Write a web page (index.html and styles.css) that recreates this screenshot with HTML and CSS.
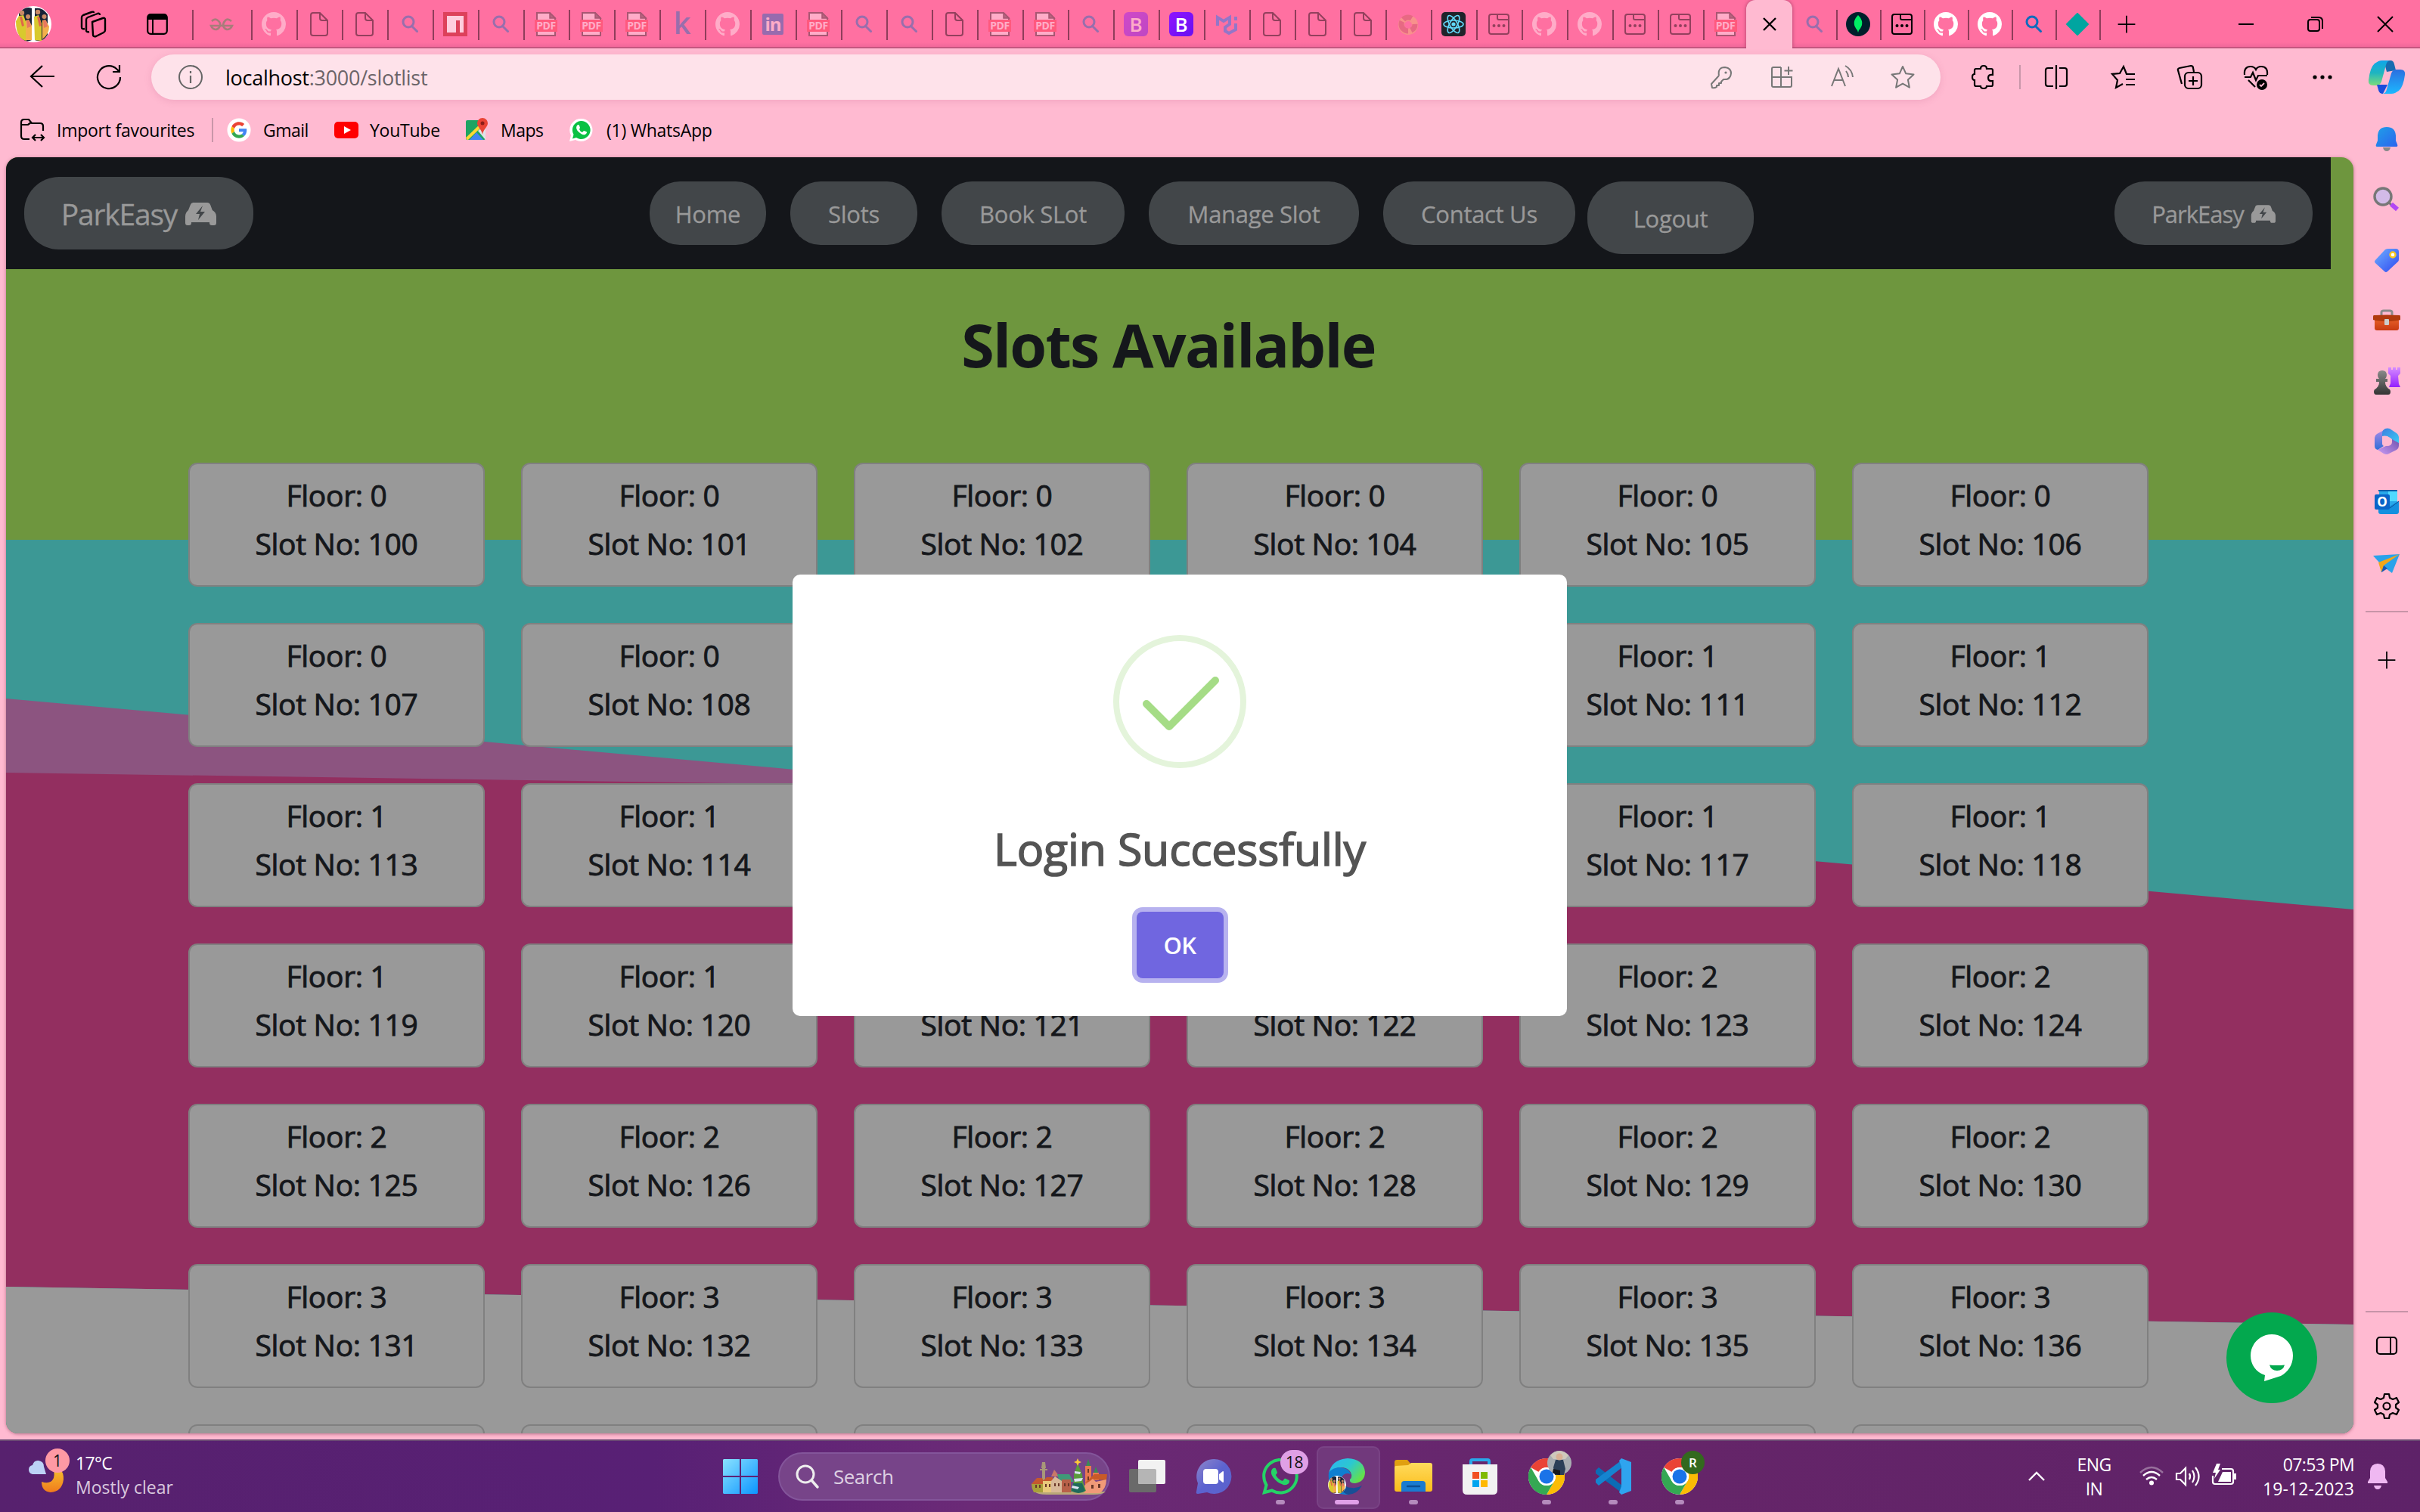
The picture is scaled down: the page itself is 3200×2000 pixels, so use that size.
FILE: index.html
```html
<!DOCTYPE html>
<html lang="en">
<head>
<meta charset="utf-8">
<title>ParkEasy</title>
<link rel="stylesheet" href="styles.css">
</head>
<body>
<svg class="defs" width="0" height="0">
  <defs>
    <linearGradient id="gCop1" x1="0" y1="0" x2="0" y2="1"><stop offset="0" stop-color="#0fa5e9"/><stop offset=".5" stop-color="#1fb5c0"/><stop offset="1" stop-color="#7bdc7a"/></linearGradient>
    <linearGradient id="gCop2" x1="0" y1="0" x2="0" y2="1"><stop offset="0" stop-color="#2b6fe0"/><stop offset="1" stop-color="#1cb8ff"/></linearGradient>
    <linearGradient id="gBell" x1="0" y1="0" x2="1" y2="1"><stop offset="0" stop-color="#1fa0e8"/><stop offset="1" stop-color="#2b63ee"/></linearGradient>
    <linearGradient id="gTag" x1="0" y1="0" x2="1" y2="1"><stop offset="0" stop-color="#6fb0ff"/><stop offset="1" stop-color="#2f48f0"/></linearGradient>
    <linearGradient id="gBox" x1="0" y1="0" x2="0" y2="1"><stop offset="0" stop-color="#f06a30"/><stop offset="1" stop-color="#c83a12"/></linearGradient>
    <linearGradient id="gRook" x1="0" y1="0" x2="0" y2="1"><stop offset="0" stop-color="#d68cff"/><stop offset="1" stop-color="#9420ff"/></linearGradient>
    <linearGradient id="gPawn" x1="0" y1="0" x2="0" y2="1"><stop offset="0" stop-color="#8a8a8a"/><stop offset="1" stop-color="#333"/></linearGradient>
    <linearGradient id="gWin" x1="0" y1="0" x2="1" y2="1"><stop offset="0" stop-color="#8ae2ff"/><stop offset="1" stop-color="#0c95ff"/></linearGradient>
    <linearGradient id="gMoon" x1="0" y1="0" x2="0" y2="1"><stop offset="0" stop-color="#f7c62f"/><stop offset="1" stop-color="#f07a1c"/></linearGradient>
    <linearGradient id="gEdge" x1="0" y1="0" x2="1" y2=".6"><stop offset="0" stop-color="#2cb4f4"/><stop offset=".55" stop-color="#2cc8d0"/><stop offset="1" stop-color="#64e04a"/></linearGradient>
    <linearGradient id="gChat" x1="0" y1="0" x2="1" y2="1"><stop offset="0" stop-color="#8f86c8"/><stop offset=".5" stop-color="#5c63d0"/><stop offset="1" stop-color="#5a62cc"/></linearGradient>
    <linearGradient id="gFold" x1="0" y1="0" x2="0" y2="1"><stop offset="0" stop-color="#ffdb5c"/><stop offset="1" stop-color="#fbbd1b"/></linearGradient>
    <linearGradient id="gM1" x1="0" y1="0" x2="0" y2="1"><stop offset="0" stop-color="#a98be8"/><stop offset="1" stop-color="#2f6fd8"/></linearGradient>
    <linearGradient id="gM2" x1="0" y1="0" x2="1" y2="1"><stop offset="0" stop-color="#3a7fe0"/><stop offset="1" stop-color="#3ccbf4"/></linearGradient>
    <linearGradient id="gM3" x1="1" y1="0" x2="0" y2="1"><stop offset="0" stop-color="#6a4aa8"/><stop offset="1" stop-color="#c99cf4"/></linearGradient>
  </defs>
  <symbol id="github" viewBox="0 0 16 16"><path fill="#fff" d="M8 0C3.58 0 0 3.58 0 8c0 3.54 2.29 6.53 5.47 7.59.4.07.55-.17.55-.38 0-.19-.01-.82-.01-1.49-2.01.37-2.53-.49-2.69-.94-.09-.23-.48-.94-.82-1.13-.28-.15-.68-.52-.01-.53.63-.01 1.08.58 1.23.82.72 1.21 1.87.87 2.33.66.07-.52.28-.87.51-1.07-1.78-.2-3.64-.89-3.64-3.95 0-.87.31-1.59.82-2.15-.08-.2-.36-1.02.08-2.12 0 0 .67-.21 2.2.82.64-.18 1.32-.27 2-.27s1.36.09 2 .27c1.53-1.04 2.2-.82 2.2-.82.44 1.1.16 1.92.08 2.12.51.56.82 1.27.82 2.15 0 3.07-1.87 3.75-3.65 3.95.29.25.54.73.54 1.48 0 1.07-.01 1.93-.01 2.2 0 .21.15.46.55.38A8.01 8.01 0 0016 8c0-4.42-3.58-8-8-8z"/></symbol>
  <symbol id="doc" viewBox="0 0 32 32"><path fill="none" stroke="#000" stroke-width="2" d="M8 1h9l10 10v17a3 3 0 0 1-3 3H8a3 3 0 0 1-3-3V4a3 3 0 0 1 3-3zM17 1v7a3 3 0 0 0 3 3h7"/></symbol>
  <symbol id="mag" viewBox="0 0 32 32"><g fill="none" stroke="#0f6cbd" stroke-width="3"><circle cx="14" cy="13" r="7"/><path d="M18.500 18.500l7 7" stroke-linecap="round"/></g></symbol>
  <symbol id="win" viewBox="0 0 32 32"><path fill="none" stroke="#000" stroke-width="2" d="M6 3h20a3 3 0 0 1 3 3v20a3 3 0 0 1-3 3H6a3 3 0 0 1-3-3V6a3 3 0 0 1 3-3zM14 3v5a2 2 0 0 0 2 2h13"/><circle cx="9.500" cy="18" r="2"/><circle cx="16" cy="18" r="2"/><circle cx="22.500" cy="18" r="2"/></symbol>
  <symbol id="sheet" viewBox="0 0 32 32"><path fill="#fff" stroke="#333" stroke-width="2" d="M4 1h17l7 7v23H4z"/><path d="M21 1v7h7z" fill="#555" stroke="#333" stroke-width="1.500"/><rect x="1" y="10" width="30" height="16" fill="#ff3b4e"/></symbol>
  <symbol id="car" viewBox="0 0 42 32"><path fill="#999" fill-rule="evenodd" d="M12 1h18c2 0 3.500 1 4.200 3l2.600 7c3 1.500 5.200 4.500 5.200 8v9c0 2-1 3-3 3h-3c-2 0-3-1-3-3v-1H9v1c0 2-1 3-3 3H4c-2 0-3-1-3-3v-9c0-3.500 2-6.500 4-8l2.800-7C8.500 2 10 1 12 1zm12 4l-9 11h5l-2 8 9-11h-6z"/></symbol>
  <symbol id="plus" viewBox="0 0 32 32"><path stroke="#000" stroke-width="2" d="M16 3v26M3 16h26"/></symbol>
  <symbol id="wa" viewBox="0 0 16 16"><path d="M13.601 2.326A7.854 7.854 0 0 0 7.994 0C3.627 0 .068 3.558.064 7.926c0 1.399.366 2.760 1.057 3.965L0 16l4.204-1.102a7.933 7.933 0 0 0 3.790.965h.004c4.368 0 7.926-3.558 7.930-7.930A7.898 7.898 0 0 0 13.600 2.326zM7.994 14.521a6.573 6.573 0 0 1-3.356-.920l-.240-.144-2.494.654.666-2.433-.156-.251a6.560 6.560 0 0 1-1.007-3.505c0-3.626 2.957-6.584 6.591-6.584a6.560 6.560 0 0 1 4.660 1.931 6.557 6.557 0 0 1 1.928 4.660c-.004 3.639-2.961 6.592-6.592 6.592zm3.615-4.934c-.197-.099-1.170-.578-1.353-.646-.182-.065-.315-.099-.445.099-.133.197-.513.646-.627.775-.114.133-.232.148-.430.050-.197-.100-.836-.308-1.592-.985-.590-.525-.985-1.175-1.103-1.372-.114-.198-.011-.304.088-.403.087-.088.197-.232.296-.346.100-.114.133-.198.198-.330.065-.134.034-.248-.015-.347-.050-.099-.445-1.076-.612-1.470-.160-.389-.323-.335-.445-.340-.114-.007-.247-.007-.380-.007a.729.729 0 0 0-.529.247c-.182.198-.691.677-.691 1.654 0 .977.710 1.916.810 2.049.098.133 1.394 2.132 3.383 2.992.470.205.840.326 1.129.418.475.152.904.129 1.246.080.380-.058 1.171-.480 1.338-.943.164-.464.164-.860.114-.943-.049-.084-.182-.133-.380-.232z"/></symbol>
  <symbol id="star" viewBox="0 0 32 32"><path fill="none" stroke-width="2" stroke-linejoin="round" d="M16 2l4.200 9.300 10.300 1.200-7.600 7 2 10.200L16 24.600l-8.900 5.100 2-10.200-7.600-7 10.300-1.200z"/></symbol>
  <symbol id="chrome" viewBox="0 0 48 48"><circle cx="24" cy="24" r="24" fill="#fff"/><path fill="#ea4335" d="M24 0a24 24 0 0 1 20.800 12H24a12 12 0 0 0-10.400 6L3.200 12A24 24 0 0 1 24 0z"/><path fill="#fbbc05" d="M44.800 12A24 24 0 0 1 24 48l10.400-18A12 12 0 0 0 34.400 18 12 12 0 0 0 24 12z"/><path fill="#34a853" d="M24 48A24 24 0 0 1 3.200 12l10.400 18a12 12 0 0 0 20.800 0z"/><circle cx="24" cy="24" r="12" fill="#fff"/><circle cx="24" cy="24" r="9.500" fill="#1a73e8"/></symbol>
  <symbol id="pals" viewBox="0 0 48 48"><circle cx="24" cy="24" r="24" fill="#fff"/><path fill="#182438" d="M5 10Q13-1 22 3v42Q12 50 5 38zM26 3q10-2 17 8v27q-7 11-17 7z"/><path fill="#d8c92e" d="M1 20l4-7 6-1 4 11v23q-6-1-9-6-5-7-5-20zM25 14l6-2 4 11v23l-9-1z"/><path fill="#e0664a" d="M6 14l3 0 3 12-3 1zM29 14l3 0 3 12-3 1z"/><path fill="#f2b04a" d="M14 19l4-1 4 8v19h-8zM36 19l4-1 5 9q0 10-9 17z"/><path fill="#e8785e" d="M15 19h4l2 8-5 2zM37 19h4l2 8-5 2z"/><g fill="#c98a66"><circle cx="9" cy="9" r="3.200"/><circle cx="17" cy="14" r="3"/><circle cx="30" cy="8" r="3.200"/><circle cx="38.500" cy="14" r="3"/></g></symbol>
</svg>

<header class="tabs">
  <div class="tabs-left">
    <svg class="avatar"><use href="#pals"/></svg>
    <svg class="ws" viewBox="0 0 34 34"><g fill="none" stroke="#000" stroke-width="2.400" stroke-linejoin="round"><path d="M16 14l14-5q3-1 3 2v14q0 2-2 3l-10 5q-4 1-4-2z"/><path d="M12 27q-4 1-4-2V11q0-2 2-3l13-5q3-1 3 2"/><path d="M6 23q-4 1-4-2V8q0-2 2-3l11-4q3-1 3 1"/></g></svg>
    <svg class="vt" viewBox="0 0 28 28"><rect x="1.200" y="1.200" width="25.600" height="25.600" rx="4" fill="none" stroke="#000" stroke-width="2.200"/><path d="M1 8V4q0-3 3-3h20q3 0 3 3v4zM7 8v19h2V8z"/></svg>
  </div>
  <div class="tab first dim"><svg class="i32" viewBox="0 0 32 32"><g fill="none" stroke="#2f8d46" stroke-width="2.600"><path d="M3 12q4-4 8-1t3 7q-1 4-5 5-5 0-7-5h28q-2 5-7 5-4-1-5-5 0-4 3-7t8 1"/></g></svg></div>
  <div class="tab dim"><svg class="i32"><use href="#github"/></svg></div>
  <div class="tab dim"><svg class="i32"><use href="#doc"/></svg></div>
  <div class="tab dim"><svg class="i32"><use href="#doc"/></svg></div>
  <div class="tab dim"><svg class="i32"><use href="#mag"/></svg></div>
  <div class="tab mid"><svg class="i32" viewBox="0 0 32 32"><rect width="32" height="32" fill="#cb2837"/><path fill="#fff" d="M5 5h22v22h-5V11h-5v16H5z"/></svg></div>
  <div class="tab dim"><svg class="i32"><use href="#mag"/></svg></div>
  <div class="tab dim"><div class="pdf"><svg class="i32"><use href="#sheet"/></svg><b>PDF</b></div></div>
  <div class="tab dim"><div class="pdf"><svg class="i32"><use href="#sheet"/></svg><b>PDF</b></div></div>
  <div class="tab dim"><div class="pdf"><svg class="i32"><use href="#sheet"/></svg><b>PDF</b></div></div>
  <div class="tab dim"><span class="kay">k</span></div>
  <div class="tab dim"><svg class="i32"><use href="#github"/></svg></div>
  <div class="tab dim"><span class="linked">in</span></div>
  <div class="tab dim"><div class="pdf"><svg class="i32"><use href="#sheet"/></svg><b>PDF</b></div></div>
  <div class="tab dim"><svg class="i32"><use href="#mag"/></svg></div>
  <div class="tab dim"><svg class="i32"><use href="#mag"/></svg></div>
  <div class="tab dim"><svg class="i32"><use href="#doc"/></svg></div>
  <div class="tab dim"><div class="pdf"><svg class="i32"><use href="#sheet"/></svg><b>PDF</b></div></div>
  <div class="tab dim"><div class="pdf"><svg class="i32"><use href="#sheet"/></svg><b>PDF</b></div></div>
  <div class="tab dim"><svg class="i32"><use href="#mag"/></svg></div>
  <div class="tab dim"><span class="boot">B</span></div>
  <div class="tab"><span class="boot">B</span></div>
  <div class="tab dim"><svg class="i32" viewBox="0 0 32 32"><g fill="none" stroke="#007fff" stroke-width="4"><path d="M4 18V7l8 5 8-5v9l-6 4v5l5 3 9-5v-8M28 6v5"/></g></svg></div>
  <div class="tab dim"><svg class="i32"><use href="#doc"/></svg></div>
  <div class="tab dim"><svg class="i32"><use href="#doc"/></svg></div>
  <div class="tab dim"><svg class="i32"><use href="#doc"/></svg></div>
  <div class="tab dim"><svg class="i32" viewBox="0 0 32 32"><circle cx="16" cy="17" r="9" fill="none" stroke="#f0c070" stroke-width="8"/><circle cx="16" cy="16" r="9" fill="none" stroke="#c8605c" stroke-width="7" stroke-dasharray="10 4 18 3 12 9"/></svg></div>
  <div class="tab"><svg class="i32" viewBox="0 0 32 32"><rect width="32" height="32" rx="5" fill="#20232a"/><g fill="none" stroke="#61dafb" stroke-width="1.600"><ellipse cx="16" cy="16" rx="13" ry="5"/><ellipse cx="16" cy="16" rx="13" ry="5" transform="rotate(60 16 16)"/><ellipse cx="16" cy="16" rx="13" ry="5" transform="rotate(120 16 16)"/></g><circle cx="16" cy="16" r="2.600" fill="#61dafb"/></svg></div>
  <div class="tab dim"><svg class="i32"><use href="#win"/></svg></div>
  <div class="tab dim"><svg class="i32"><use href="#github"/></svg></div>
  <div class="tab dim"><svg class="i32"><use href="#github"/></svg></div>
  <div class="tab dim"><svg class="i32"><use href="#win"/></svg></div>
  <div class="tab dim"><svg class="i32"><use href="#win"/></svg></div>
  <div class="tab dim last"><div class="pdf"><svg class="i32"><use href="#sheet"/></svg><b>PDF</b></div></div>
  <div class="tab-active"><svg width="18" height="18" viewBox="0 0 18 18"><path d="M1 1l16 16M17 1L1 17" stroke="#000" stroke-width="2.400"/></svg></div>
  <div class="tab r nosep dim"><svg class="i32"><use href="#mag"/></svg></div>
  <div class="tab r"><svg class="i32" viewBox="0 0 32 32"><circle cx="16" cy="16" r="16" fill="#001e2b"/><path fill="#00ed64" d="M16 4q10 10 1 20l-1 3-1-3Q6 14 16 4z"/></svg></div>
  <div class="tab r"><svg class="i32"><use href="#win"/></svg></div>
  <div class="tab r"><svg class="i32"><use href="#github"/></svg></div>
  <div class="tab r"><svg class="i32"><use href="#github"/></svg></div>
  <div class="tab r"><svg class="i32"><use href="#mag"/></svg></div>
  <div class="tab r"><svg class="i32" viewBox="0 0 32 32"><path fill="#00a5a0" stroke="#00a5a0" stroke-width="2" stroke-linejoin="round" d="M16 2l14 14-14 14L2 16z"/></svg></div>
  <div class="tab plus"><svg class="i28"><use href="#plus"/></svg></div>
  <div class="winctl">
    <svg class="i32" viewBox="0 0 32 32"><path d="M6 16h20" stroke="#000" stroke-width="2"/></svg>
    <svg class="i32" viewBox="0 0 32 32"><g fill="none" stroke="#000" stroke-width="2"><rect x="6" y="10" width="15" height="15" rx="3"/><path d="M10 7h10q5 0 5 5v10"/></g></svg>
    <svg class="i32" viewBox="0 0 32 32"><path d="M6 6l20 20M26 6L6 26" stroke="#000" stroke-width="2"/></svg>
  </div>
</header>

<div class="browser">
  <div class="left">
    <div class="toolbar">
      <div class="tool"><svg class="i36" viewBox="0 0 36 36"><path d="M34 17H4M18 3L3 17l15 14" fill="none" stroke="#000" stroke-width="2.200"/></svg></div>
      <div class="tool"><svg class="i36" viewBox="0 0 36 36"><path d="M33 18A15 15 0 1 1 28 7l3 3M32 2v9h-9" fill="none" stroke="#000" stroke-width="2.200"/></svg></div>
      <div class="address">
        <svg class="i36" viewBox="0 0 36 36"><circle cx="18" cy="18" r="15" fill="none" stroke="#666" stroke-width="2"/><path d="M18 16v10M18 10v3" stroke="#666" stroke-width="2.200"/></svg>
        <span class="url">localhost<span class="path">:3000/slotlist</span></span>
        <div class="addr-icons">
          <div><svg class="i32" viewBox="0 0 32 32"><path d="M13 14q-2-11 8-11 8 1 8 8-1 9-10 8l-3 3v2h-3v3h-3v2q-3 2-6 1l-1-5 10-11" fill="none" stroke="#777" stroke-width="2" stroke-linejoin="round"/><circle cx="22" cy="10" r="1.600" fill="#777"/></svg></div>
          <div><svg class="i32" viewBox="0 0 32 32"><path d="M15 3H5q-2 0-2 2v22q0 2 2 2h22q2 0 2-2V16H3M15 3v26M25 2v11M19.500 7.500h11" fill="none" stroke="#777" stroke-width="2"/></svg></div>
          <div><svg class="i32" viewBox="0 0 32 32"><path d="M2 28L11 5l9 23M5 20h12M21 8q3 4 3 8M20 1q9 5 10 15" fill="none" stroke="#777" stroke-width="2"/></svg></div>
          <div><svg class="i32 gray"><use href="#star"/></svg></div>
        </div>
      </div>
      <div class="tool puzzle"><svg class="i32" viewBox="0 0 32 32"><path d="M6 5h6q0-4 4-4t4 4h6q2 0 2 2v6q-6-1-6 4t6 4v5q0 2-2 2h-6q0 3-4 3t-4-3H6q-2 0-2-2v-6q-3 0-3-4t3-4V7q0-2 2-2z" fill="none" stroke="#000" stroke-width="2.200"/></svg></div>
      <i class="vsep"></i>
      <div class="tool"><svg class="i32" viewBox="0 0 32 32"><path d="M12 4H5q-3 0-3 3v18q0 3 3 3h7M20 4h7q3 0 3 3v18q0 3-3 3h-7M16 0v32" fill="none" stroke="#000" stroke-width="2.200"/></svg></div>
      <div class="tool"><svg class="i32" viewBox="0 0 32 32"><path d="M21 12l-4-10-5 9-10 1 7 8-2 10 9-5M20 12h12M20 19h12M20 26h12" fill="none" stroke="#000" stroke-width="2.200"/></svg></div>
      <div class="tool"><svg class="i32" viewBox="0 0 32 32"><path d="M6 25L1 7q-1-2 2-3l15-3q3 0 3 3l1 5M21 15v12M15 21h12" fill="none" stroke="#000" stroke-width="2.200"/><rect x="10" y="10" width="22" height="21" rx="5" fill="none" stroke="#000" stroke-width="2.200"/></svg></div>
      <div class="tool"><svg class="i32" viewBox="0 0 32 32"><path d="M1 13Q0 2 9 2q5 0 7 4 2-4 7-4 9 0 8 11M1 16h8l3-6 4 10 3-6h12M6 20l9 9" fill="none" stroke="#000" stroke-width="2.200"/><circle cx="24" cy="26" r="7"/><path d="M21 26l2 2 4-4" fill="none" stroke="#ffbad1" stroke-width="1.800"/></svg></div>
      <div class="tool"><svg class="i32" viewBox="0 0 32 32"><circle cx="6" cy="16" r="2.600"/><circle cx="16" cy="16" r="2.600"/><circle cx="26" cy="16" r="2.600"/></svg></div>
    </div>
    <div class="favs">
      <div class="fav imp"><svg class="i32" viewBox="0 0 32 32"><path d="M12 28H5q-4 0-4-4V6q0-4 4-4h6l4 5h11q4 0 4 4v6M2 9h8l4-3M16 26h15M20 22l-4 4 4 4M27 22l4 4-4 4" fill="none" stroke="#000" stroke-width="2.200"/></svg><span>Import favourites</span></div>
      <i class="vsep"></i>
      <div class="fav gm"><svg class="i32" viewBox="-12 -12 72 72"><circle cx="24" cy="24" r="35" fill="#fff"/><path fill="#ea4335" d="M24 9.500c3.540 0 6.710 1.220 9.210 3.600l6.850-6.850C35.900 2.380 30.470 0 24 0 14.620 0 6.510 5.380 2.560 13.220l7.980 6.190C12.430 13.720 17.740 9.500 24 9.500z"/><path fill="#4285f4" d="M46.980 24.550c0-1.570-.15-3.090-.38-4.550H24v9.020h12.940c-.58 2.960-2.260 5.480-4.780 7.180l7.730 6c4.510-4.180 7.090-10.360 7.090-17.650z"/><path fill="#fbbc05" d="M10.530 28.590c-.48-1.450-.76-2.990-.76-4.590s.27-3.140.76-4.590l-7.980-6.190C.92 16.460 0 20.120 0 24c0 3.880.92 7.540 2.560 10.780l7.970-6.190z"/><path fill="#34a853" d="M24 48c6.480 0 11.930-2.130 15.890-5.810l-7.730-6c-2.150 1.450-4.920 2.300-8.160 2.300-6.260 0-11.570-4.220-13.470-9.910l-7.980 6.190C6.510 42.620 14.620 48 24 48z"/></svg><span>Gmail</span></div>
      <div class="fav yt"><svg class="i32" viewBox="0 0 32 32"><rect y="5" width="32" height="22" rx="5" fill="#f00"/><path fill="#fff" d="M13 11l9 5-9 5z"/></svg><span>YouTube</span></div>
      <div class="fav mp"><svg class="i32" viewBox="0 0 32 32"><rect x="2" y="3" width="26" height="26" rx="2" fill="#1ea362"/><path fill="#4285f4" d="M7 29l9-10 9 10z"/><path fill="#dfe3e8" d="M18 17l10 12V8z"/><path stroke="#fdd835" stroke-width="4" d="M3 28L27 5"/><path fill="#ea4335" d="M24 0a7 7 0 0 1 7 7c0 5-6 8-7 15-1-7-7-10-7-15a7 7 0 0 1 7-7z"/><circle cx="24" cy="7" r="2.500" fill="#8c1d18"/></svg><span>Maps</span></div>
      <div class="fav wh"><svg class="i32" viewBox="0 0 32 32"><path fill="#fff" d="M16 1a15 15 0 1 1-7 28l-8 2 2-8A15 15 0 0 1 16 1z"/><path fill="#0ac143" d="M16 4a12 12 0 1 1-6 22l-5 1.500L6.500 22A12 12 0 0 1 16 4z"/><path fill="#fff" d="M11 10q2-2 3 0l1 3-1 2q1 3 4 4l2-2 3 1q2 1 0 3-3 3-8-1-7-5-4-10z"/></svg><span>(1) WhatsApp</span></div>
    </div>

    <main class="page">
      <svg class="waves" viewBox="0 0 3104 1688" preserveAspectRatio="none">
        <rect width="3104" height="1688" fill="#6e963e"/>
        <rect y="506" width="3104" height="1182" fill="#3c9895"/>
        <path fill="#8c5480" d="M0 716l1298 117v200L0 814z"/>
        <path fill="#932f60" d="M0 814l1298 19 1806 162v549L0 1494z"/>
        <path fill="#999" d="M0 1494l3104 50v144H0z"/>
      </svg>
      <nav class="nav">
        <a class="pill brand">ParkEasy<svg width="42" height="32"><use href="#car"/></svg></a>
        <div class="links">
          <a class="pill w1">Home</a><a class="pill w2">Slots</a><a class="pill w3">Book SLot</a><a class="pill w4">Manage Slot</a><a class="pill w5">Contact Us</a><a class="pill w6">Logout</a>
        </div>
        <a class="pill brand2">ParkEasy<svg width="33" height="26"><use href="#car"/></svg></a>
      </nav>
      <h1 class="title">Slots Available</h1>
      <div class="grid">
        <div class="card"><p>Floor: 0</p><p>Slot No: 100</p></div>
        <div class="card"><p>Floor: 0</p><p>Slot No: 101</p></div>
        <div class="card"><p>Floor: 0</p><p>Slot No: 102</p></div>
        <div class="card"><p>Floor: 0</p><p>Slot No: 104</p></div>
        <div class="card"><p>Floor: 0</p><p>Slot No: 105</p></div>
        <div class="card"><p>Floor: 0</p><p>Slot No: 106</p></div>
        <div class="card"><p>Floor: 0</p><p>Slot No: 107</p></div>
        <div class="card"><p>Floor: 0</p><p>Slot No: 108</p></div>
        <div class="card"></div>
        <div class="card"></div>
        <div class="card"><p>Floor: 1</p><p>Slot No: 111</p></div>
        <div class="card"><p>Floor: 1</p><p>Slot No: 112</p></div>
        <div class="card"><p>Floor: 1</p><p>Slot No: 113</p></div>
        <div class="card"><p>Floor: 1</p><p>Slot No: 114</p></div>
        <div class="card"></div>
        <div class="card"></div>
        <div class="card"><p>Floor: 1</p><p>Slot No: 117</p></div>
        <div class="card"><p>Floor: 1</p><p>Slot No: 118</p></div>
        <div class="card"><p>Floor: 1</p><p>Slot No: 119</p></div>
        <div class="card"><p>Floor: 1</p><p>Slot No: 120</p></div>
        <div class="card"><p class="gap"></p><p>Slot No: 121</p></div>
        <div class="card"><p class="gap"></p><p>Slot No: 122</p></div>
        <div class="card"><p>Floor: 2</p><p>Slot No: 123</p></div>
        <div class="card"><p>Floor: 2</p><p>Slot No: 124</p></div>
        <div class="card"><p>Floor: 2</p><p>Slot No: 125</p></div>
        <div class="card"><p>Floor: 2</p><p>Slot No: 126</p></div>
        <div class="card"><p>Floor: 2</p><p>Slot No: 127</p></div>
        <div class="card"><p>Floor: 2</p><p>Slot No: 128</p></div>
        <div class="card"><p>Floor: 2</p><p>Slot No: 129</p></div>
        <div class="card"><p>Floor: 2</p><p>Slot No: 130</p></div>
        <div class="card"><p>Floor: 3</p><p>Slot No: 131</p></div>
        <div class="card"><p>Floor: 3</p><p>Slot No: 132</p></div>
        <div class="card"><p>Floor: 3</p><p>Slot No: 133</p></div>
        <div class="card"><p>Floor: 3</p><p>Slot No: 134</p></div>
        <div class="card"><p>Floor: 3</p><p>Slot No: 135</p></div>
        <div class="card"><p>Floor: 3</p><p>Slot No: 136</p></div>
        <div class="card"></div><div class="card"></div><div class="card"></div><div class="card"></div><div class="card"></div><div class="card"></div>
      </div>
      <div class="modal">
        <svg class="tick" viewBox="0 0 176 176"><circle cx="88" cy="88" r="84" fill="none" stroke="#e4f4db" stroke-width="8"/><path d="M44 91l30 30 61-61" fill="none" stroke="#a5dc86" stroke-width="10" stroke-linecap="round" stroke-linejoin="round"/></svg>
        <h2>Login Successfully</h2>
        <button class="ok">OK</button>
      </div>
      <div class="chat"><svg width="56" height="70" viewBox="0 0 56 70"><path fill="#fff" d="M28 4c16 0 28 13 28 28 0 13-7 22-16 27L18 66l1-8C7 54 0 44 0 32 0 17 12 4 28 4z"/><path fill="#03a84e" d="M25 44.500q10 1 20 0-2 7.500-10 7.500t-10-7.500z"/></svg></div>
    </main>
  </div>

  <aside class="side">
    <div class="s cop"><svg width="48" height="44" viewBox="0 0 48 44"><path fill="#176bb0" d="M20 0h9q4 0 5 5l2 8-12 2z"/><path fill="url(#gCop1)" d="M13 1q2-1 5-1h10q-4 1-5 6l-6 22q-2 5-6 5H6q-7 0-6-7Q2 9 8 4z"/><path fill="#1a4ddb" d="M11 32h14l-6 12q-5 0-6-5z"/><path fill="url(#gCop2)" d="M35 43q-2 1-5 1H19q4-1 5-6l6-21q2-5 6-5h6q7 0 6 7-2 16-8 21z"/></svg></div>
    <div class="s"><svg class="i32" viewBox="0 0 32 32"><path fill="url(#gBell)" d="M16 0q11 0 12 11v7l2 5q1 3-1 3H3q-2 0-1-3l2-5v-7Q5 0 16 0z"/><path fill="#888" d="M11 27h10q-1 5-5 5t-5-5z"/></svg></div>
    <div class="s"><svg class="i36" viewBox="0 0 36 36"><ellipse cx="13" cy="14" rx="11" ry="11" fill="#d3bbe8" stroke="#777" stroke-width="3.400"/><path d="M21 22l4 4" stroke="#777" stroke-width="3"/><path d="M24 24l8 7" stroke="#b346f5" stroke-width="6"/></svg></div>
    <div class="s"><svg class="i32" viewBox="0 0 32 32"><path fill="url(#gTag)" d="M18 1h10q4 0 4 4v10q0 2-1 3L17 31q-2 2-4 0L1 20q-2-2 0-4L14 2q2-1 4-1z"/><circle cx="24" cy="9" r="3.500" fill="#fff" stroke="#f8c820" stroke-width="2.400"/></svg></div>
    <div class="s"><svg class="i36" viewBox="0 0 36 36"><path d="M11 11V7q0-2 3-2h8q3 0 3 2v4" fill="none" stroke="#8a8a8a" stroke-width="3"/><rect x="2" y="11" width="32" height="20" rx="3" fill="url(#gBox)"/><path fill="#b03a0e" d="M1 11q17-1 34 0 1 0 1 2v4q-6 2-18 2T0 17v-4q0-2 1-2z"/><rect x="15" y="16" width="6" height="8" rx="1" fill="#ccc"/></svg></div>
    <div class="s"><svg class="i36" viewBox="0 0 36 36"><path fill="url(#gRook)" d="M20 0h4v3h2V0h4v3h2V0h4v8l-3 3 1 11 2 4H21l2-5V11l-3-3z"/><path fill="url(#gPawn)" d="M12 4q6 0 6 6 0 3-2 5h3v4h-3q0 6 4 9 3 1 3 4 0 4-3 4H4q-3 0-3-4 0-3 3-4 4-3 4-9H4v-4h4q-2-2-2-5 0-6 6-6z"/></svg></div>
    <div class="s"><svg class="i36" viewBox="0 0 36 36"><path fill="url(#gM3)" d="M34 13v11q0 3-3 5l-10 5q-3 2-7 0l-8-5 13-6 6-4V10l6 1z"/><path fill="url(#gM1)" d="M16 2L5 8q-3 2-3 5v11q0 4 4 5l8-5q-2-1-2-3V9q0-5 4-7z"/><path fill="url(#gM2)" d="M12 11V7q0-4 4-6 3-1 6 0l9 6q3 2 3 5v8l-9-5-6-4q-4-1-7 0z"/><path fill="#ffbad1" d="M18 12q7 0 7 6t-7 6q-6-1-6-6t6-6z"/></svg></div>
    <div class="s"><div class="ol"><svg class="i32" viewBox="0 0 32 32"><rect x="6" y="0" width="24" height="24" rx="1" fill="#28a8ea"/><path fill="#50d9ff" d="M18 1h12v14H18z"/><path fill="#0f5ea8" d="M5 0h25v2H5z"/><path fill="#1490df" d="M5 15l14 7 13-7v14q0 3-3 3H8q-3 0-3-3z"/><path stroke="#0a4f94" stroke-width="1" d="M20 24l12-9"/><rect y="6" width="20" height="20" rx="2" fill="#0a64c8"/></svg><b>O</b></div></div>
    <div class="s"><svg class="i36" viewBox="0 0 36 36"><path fill="#2aa2ea" d="M0 9L35 7 25 32l-8-6-6 5-2-12z"/><path fill="#f2a61a" d="M35 7L7 18l4 13 3-9z"/><path fill="#1c55b0" d="M14 22l5 4-8 5z"/></svg></div>
    <i class="hsep a"></i>
    <div class="s pl"><svg class="i28"><use href="#plus"/></svg></div>
    <i class="hsep b"></i>
    <div class="s bt"><svg class="i32" viewBox="0 0 32 32"><rect x="3" y="5" width="26" height="22" rx="4" fill="none" stroke="#000" stroke-width="2.200"/><path d="M21 5v22" stroke="#000" stroke-width="2"/></svg></div>
    <div class="s"><svg class="i36" viewBox="0 0 36 36"><path fill="none" stroke="#000" stroke-width="2.200" stroke-linejoin="round" d="M15 2h6l1 5 4 2 5-2 3 6-4 3v4l4 3-3 6-5-2-4 2-1 5h-6l-1-5-4-2-5 2-3-6 4-3v-4l-4-3 3-6 5 2 4-2z"/><circle cx="18" cy="18" r="4.500" fill="none" stroke="#000" stroke-width="2.200"/></svg></div>
  </aside>
</div>

<footer class="taskbar">
  <div class="weather">
    <div class="wicon"><svg width="56" height="56" viewBox="0 0 56 56"><path fill="url(#gMoon)" d="M32 14q16 2 15 17-2 16-17 17-12-1-12-14 12 4 16-5 2-8-2-15z"/><path fill="#bcd2f6" d="M6 24q-5-1-5-6t5-6q2-7 8-6 7 1 7 8l3 10z"/></svg><b>1</b></div>
    <div class="wtext"><span>17°C</span><span class="soft">Mostly clear</span></div>
  </div>
  <div class="apps">
    <svg class="start" width="46" height="46" viewBox="0 0 46 46"><path fill="url(#gWin)" d="M1 0h21v22H0V1zM24 0h21l1 1v21H24zM0 24h22v22H1l-1-1zM24 24h22v21l-1 1H24z"/></svg>
    <div class="search"><svg class="i32" viewBox="0 0 32 32"><circle cx="14" cy="13" r="11" fill="none" stroke="#eee" stroke-width="3"/><path d="M22 21l8 9" stroke="#eee" stroke-width="3.500" stroke-linecap="round"/></svg><span>Search</span>
      <svg class="city" width="100" height="48" viewBox="0 0 100 48"><path fill="#b9a878" d="M4 44h94q-4 4-16 4H20Q8 48 4 44z"/><path fill="#a89878" d="M14 5h4l1 8h-1v20h-4V13h-1zM11 14h10v2H11z"/><path fill="#a8a03a" d="M0 34l7-7 8 7v11H3q-3-5-3-11z"/><path fill="#c4582e" d="M0 34l7-8h7l4 8z"/><path fill="#e8c87a" d="M15 30h13v15H15z"/><path fill="#c4582e" d="M15 30l5-5h8v5z"/><path fill="#c87868" d="M30 15l7 9H26z"/><path fill="#3f9a78" d="M34 21h16l6 10H37z"/><path fill="#d8b898" d="M26 30l5-6 9 6v15H26z"/><path fill="#b86048" d="M40 28h12v17H40z"/><path fill="#3c8a54" d="M72 10l3-9 3 9zM82 19l3-8 3 8z"/><path fill="#e87850" d="M71 10h8v34h-8zM81 19h8v10h-8z"/><path fill="#c85a28" d="M70 33l13-12h17l-1 8-15-1z"/><path fill="#f09a78" d="M70 36l11-9 4 4 14-3q0 12-9 18H70z"/><path fill="#5a9a3c" d="M61 7l6 14 1 10 4 12q-10 5-20 0l4-12 0-10z"/><path fill="#1f6a5c" d="M55 33h12l4 10q-9 6-18 0z"/><g fill="#d8e4f0"><path d="M57 17l8 1-1 3-7-1zM56 27l12-1-2 4-9 1zM54 36l9 2-2 3-8-2z"/></g><path fill="#ffc83a" d="M61 0l1.500 3.500L66 5l-3.500 1.500L61 10l-1.500-3.500L56 5l3.500-1.500z"/><g fill="#6a3828"><path d="M18 34h2v4h-2zM23 34h2v4h-2zM30 33h2v4h-2zM35 33h2v4h-2zM43 33h2v4h-2zM48 33h2v4h-2zM74 14h2v5h-2zM74 24h2v5h-2zM79 35h3v5h-3zM88 34h3v5h-3zM5 35h2v4H5zM10 35h2v4h-2z"/></g></svg>
    </div>
    <div class="app"><svg width="48" height="44" viewBox="0 0 48 44"><rect x="0" y="12" width="36" height="31" rx="2" fill="#6a6a6a"/><rect x="12" y="0" width="36" height="32" rx="2" fill="#f2f2f2"/><path fill="#b5b5b5" d="M12 12h22q2 0 2 2v18H14q-2 0-2-2z"/></svg></div>
    <div class="app"><svg width="46" height="46" viewBox="0 0 46 46"><path fill="url(#gChat)" d="M23 0a23 23 0 1 1-9 44L2 46q-3 0-2-3l2-11A23 23 0 0 1 23 0z"/><rect x="9" y="13" width="20" height="20" rx="4" fill="#fff"/><path fill="#fff" d="M30 20l5-4q1 0 1 1v13q0 1-1 1l-5-4z"/></svg></div>
    <div class="app"><svg class="i48 green"><use href="#wa"/></svg><b class="badge">18</b><i class="dot"></i></div>
    <div class="app on"><svg class="i48" viewBox="0 0 48 48"><path fill="url(#gEdge)" d="M0 20Q4 1 25 0q21 1 23 18 0 13-13 15-8 0-7-5 3-2 2-7-3-9-14-9Q7 12 0 20z"/><path fill="#0e7fd0" d="M0 19q5-7 15-7 12 1 14 9-8-3-12 4-4 10 6 18l4 5Q8 49 2 36-1 28 0 19z"/><path fill="#174f96" d="M17 25q1 14 14 14 6 1 13-3-6 11-18 12-11-3-11-14 0-6 2-9z"/></svg><svg class="mini"><use href="#pals"/></svg><i class="dot pillb"></i></div>
    <div class="app"><svg width="50" height="44" viewBox="0 0 50 44"><path fill="#e0a010" d="M0 3q0-3 3-3h14l5 6v8H0z"/><path fill="url(#gFold)" d="M0 10q0-2 2-2l16-1 4-3h25q3 0 3 3v32q0 3-3 3H3q-3 0-3-3z"/><path fill="#1a7bd0" d="M9 42V32q0-4 4-4h24q4 0 4 4v10z"/><path d="M17 35h16" stroke="#0c4f94" stroke-width="2.500" stroke-linecap="round"/></svg><i class="dot"></i></div>
    <div class="app"><svg width="46" height="48" viewBox="0 0 46 48"><path fill="none" stroke="#28a8ea" stroke-width="4" d="M11 12V4q0-2 2-2h20q2 0 2 2v8"/><path fill="#f2f2f2" d="M0 8h46v34q0 6-6 6H6q-6 0-6-6z"/><path fill="#f25022" d="M13 18h9v9h-9z"/><path fill="#7fba00" d="M24 18h9v9h-9z"/><path fill="#00a4ef" d="M13 29h9v9h-9z"/><path fill="#ffb900" d="M24 29h9v9h-9z"/></svg></div>
    <div class="app"><svg class="i48"><use href="#chrome"/></svg><svg class="face" viewBox="0 0 32 32"><circle cx="16" cy="16" r="16" fill="#a9adb2"/><path fill="#cfc8bc" d="M4 6Q16-6 28 6l-4 5H8z"/><path fill="#2c3f58" d="M11 12h10l3 12-2 8H10L8 22z"/><path fill="#15181c" d="M8 24l9 2v6q-6 0-10-3z"/><circle cx="16" cy="8" r="4.500" fill="#d8b095"/></svg><i class="dot"></i></div>
    <div class="app"><svg class="i48" viewBox="0 0 48 48"><path fill="#0b6cb5" d="M1 16l4-4 31 24v10L1 20z"/><path fill="#1584cf" d="M1 32l4 4 31-24V2L1 28z"/><path fill="#2fa4ef" d="M35 0l13 5v38l-13 5-3-3 3-8V11l-3-8z"/></svg><i class="dot"></i></div>
    <div class="app"><svg class="i48"><use href="#chrome"/></svg><b class="rbadge">R</b><i class="dot"></i></div>
  </div>
  <div class="tray">
    <svg class="chev" width="24" height="14" viewBox="0 0 24 14"><path d="M2 12L12 2l10 10" fill="none" stroke="#fff" stroke-width="2.400"/></svg>
    <div class="lang"><span>ENG</span><span>IN</span></div>
    <div class="ti"><svg class="i32" viewBox="0 0 32 32"><g fill="none" stroke="#fff" stroke-width="2.400"><path d="M1 11q15-14 30 0" stroke-opacity=".35"/><path d="M5 15q11-10 22 0M9 20q7-6 14 0"/></g><circle cx="16" cy="24.500" r="3" fill="#fff"/></svg></div>
    <div class="ti"><svg class="i32" viewBox="0 0 32 32"><path d="M1 12h5l7-7v22l-7-7H1zM18 12q2 4 0 8M22 8q5 8 0 16M26 4q9 12 0 24" fill="none" stroke="#fff" stroke-width="2.200"/></svg></div>
    <div class="ti"><svg class="i32" viewBox="0 0 32 32"><path d="M13 6h12q3 0 3 3v14q0 3-3 3H4q-3 0-3-3V15" fill="none" stroke="#fff" stroke-width="2.200"/><path fill="#fff" d="M14 10h11v13H8zM29 12h3v8h-3zM6-1L1 11h4l-2 8 8-12H8l3-8z"/></svg></div>
    <div class="clock"><span>07:53 PM</span><span>19-12-2023</span></div>
    <svg class="tbell" width="26" height="34" viewBox="0 0 26 34"><path fill="#efb8f2" d="M13 0q9 0 10 10v9l3 5v2H0v-2l3-5v-9Q4 0 13 0zM8 29h10q-1 5-5 5t-5-5z"/></svg>
  </div>
</footer>
</body>
</html>
```
FILE: styles.css
```css
* { box-sizing: border-box; }
body {
  margin: 0; width: 3200px; height: 2000px; overflow: hidden;
  display: flex; flex-direction: column;
  font-family: "Open Sans", "Noto Sans", sans-serif;
  background: #ffbad1; color: #000;
}
svg { display: block; flex: none; overflow: visible; }
.defs { position: absolute; }
.i28 { width: 28px; height: 28px; }
.i32 { width: 32px; height: 32px; }
.i36 { width: 36px; height: 36px; }
.i48 { width: 48px; height: 48px; }

/* tab strip */
.tabs { height: 64px; flex: none; display: flex; align-items: center; background: linear-gradient(#ff70a1 0 56px, #f0689a 62px, #c4567f 62px); }
.tabs-left { width: 254px; display: flex; align-items: center; padding-left: 20px; }
.avatar { width: 48px; height: 48px; }
.ws { width: 34px; height: 34px; margin-left: 38px; }
.vt { width: 28px; height: 28px; margin-left: 54px; }
.tab { width: 60px; height: 40px; margin-top: 2px; border-left: 2px solid #8f3d5a; display: flex; align-items: center; justify-content: center; flex: none; }
.tab > * { margin-left: -2px; margin-top: -2px; }
.tab.first { width: 78px; }
.tab.last { width: 57px; }
.tab.last > * { margin-left: 0; }
.tab.r { width: 58px; }
.tab.nosep { border-color: transparent; }
.tab.dim > * { opacity: .42; }
.tab.mid > * { opacity: .65; }
.tab.plus { width: 72px; }
.pdf { position: relative; width: 32px; height: 32px; }
.pdf b { position: absolute; left: 0; top: 10px; width: 32px; line-height: 16px; font-size: 14px; text-align: center; color: #fff; letter-spacing: -.5px; }
.kay { font-size: 40px; line-height: 32px; height: 36px; font-weight: 600; color: #0f6cbd; }
.linked { width: 28px; height: 28px; border-radius: 2px; background: #0a66c2; color: #fff; font-weight: 700; font-size: 24px; line-height: 27px; text-align: center; letter-spacing: -1px; }
.boot { width: 32px; height: 32px; border-radius: 6px; background: linear-gradient(135deg, #9013ff, #6610f2); color: #fff; font-weight: 600; font-size: 26px; line-height: 32px; text-align: center; }
.tab-active { width: 61px; height: 64px; background: #ffbad1; border-radius: 12px 12px 0 0; box-shadow: 0 0 5px #a84168; clip-path: inset(0 -6px 0 -6px); display: flex; align-items: center; justify-content: center; }
.winctl { margin-left: auto; display: flex; gap: 60px; padding-right: 30px; }

/* browser chrome */
.browser { flex: 1; min-height: 0; display: flex; }
.left { width: 3112px; flex: none; padding-left: 8px; display: flex; flex-direction: column; }
.toolbar { height: 76px; flex: none; display: flex; align-items: center; padding-left: 4px; }
.tool { width: 88px; display: flex; justify-content: center; flex: none; }
.tool.puzzle { margin-left: 13px; }
.vsep { width: 2px; height: 32px; background: #c996a9; flex: none; }
.toolbar .vsep { margin: 0 3px; }
.address { width: 2366px; height: 60px; margin-left: 12px; border-radius: 30px; background: #fee2ea; box-shadow: 0 2px 10px rgba(180, 80, 120, .18); display: flex; align-items: center; padding: 0 10px 0 34px; flex: none; }
.url { margin-left: 28px; font-size: 27px; letter-spacing: -.27px; white-space: nowrap; }
.path { color: #6b6468; }
.addr-icons { margin-left: auto; display: flex; }
.addr-icons div { width: 80px; display: flex; justify-content: center; }
.gray { stroke: #777; }
.favs { height: 68px; flex: none; display: flex; align-items: center; padding-bottom: 5px; font-size: 23px; white-space: nowrap; letter-spacing: -.25px; }
.fav { display: flex; align-items: center; flex: none; }
.fav span { margin-left: 16px; }
.imp { width: 272px; padding-left: 19px; }
.gm { margin-left: 18px; width: 142px; letter-spacing: -.5px; }
.yt { width: 172px; }
.yt span { margin-left: 15px; }
.mp { width: 138px; letter-spacing: -.5px; }
.wh span { margin-left: 18px; }

/* page */
.page { flex: none; position: relative; width: 3104px; height: 1688px; border-radius: 16px; overflow: hidden; box-shadow: 0 1px 4px rgba(120, 40, 70, .5); color: #15171b; }
.waves { position: absolute; inset: 0; width: 3104px; height: 1688px; z-index: 0; }
.nav, .title, .grid { position: relative; }
.nav { width: 3074px; height: 148px; background: #14161a; display: flex; align-items: center; padding: 0 24px; }
.pill { height: 84px; padding-top: 1px; border-radius: 40px; background: #424649; color: #999; font-size: 31px; letter-spacing: -.3px; -webkit-text-stroke: .3px #999; display: flex; align-items: center; justify-content: center; white-space: nowrap; flex: none; }
.brand { width: 303px; height: 96px; border-radius: 46px; font-size: 39px; letter-spacing: -1.2px; gap: 10px; }
.brand2 { width: 262px; margin-left: auto; gap: 9px; letter-spacing: -1px; }
.links { margin-left: 524px; height: 84px; display: flex; align-items: flex-start; }
.w1 { width: 154px; margin-right: 32px; }
.w2 { width: 168px; margin-right: 32px; }
.w3 { width: 242px; margin-right: 32px; }
.w4 { width: 278px; margin-right: 32px; }
.w5 { width: 254px; margin-right: 16px; }
.w6 { width: 220px; height: 96px; border-radius: 46px; }
.title { margin: 40px 0 0; width: 3074px; height: 120px; line-height: 120px; font-size: 79px; font-weight: 700; letter-spacing: -1.8px; text-align: center; }
.grid { margin: 96px 0 0 241px; display: grid; grid-template-columns: repeat(6, 392px); column-gap: 48px; grid-auto-rows: 164px; row-gap: 48px; }
.card { background: #999; border: 2px solid #808080; border-radius: 12px; padding-top: 9px; text-align: center; font-size: 39px; letter-spacing: -.3px; -webkit-text-stroke: .9px #15171b; }
.card p { margin: 0; line-height: 64px; white-space: nowrap; }
.gap { height: 64px; }

.modal { position: absolute; left: 1040px; top: 552px; width: 1024px; height: 584px; background: #fff; border-radius: 10px; display: flex; flex-direction: column; align-items: center; padding-top: 80px; }
.tick { width: 176px; height: 176px; }
.modal h2 { margin: 56px 0 0; height: 100px; line-height: 100px; font-size: 59px; font-weight: 400; letter-spacing: -.15px; color: #545454; -webkit-text-stroke: 1.6px #545454; white-space: nowrap; }
.ok { margin-top: 34px; width: 115px; height: 88px; flex: none; border: 0; border-radius: 8px; background: #7066e0; box-shadow: 0 0 0 6px #b7b2ef; color: #fff; font: 600 31px "Open Sans", sans-serif; letter-spacing: -.5px; }
.chat { position: absolute; left: 2936px; top: 1528px; width: 120px; height: 120px; border-radius: 50%; background: #03a84e; display: flex; align-items: center; justify-content: center; }

/* sidebar */
.side { width: 88px; display: flex; flex-direction: column; align-items: center; }
.s { height: 80px; display: flex; align-items: center; justify-content: center; flex: none; }
.s.cop { height: 76px; margin-bottom: 4px; }
.ol { position: relative; }
.ol b { position: absolute; left: 0; top: 6px; width: 20px; line-height: 20px; font-size: 17px; text-align: center; color: #fff; }
.hsep { width: 56px; height: 2px; background: #c794a8; flex: none; }
.hsep.a { margin-top: 24px; }
.pl { height: 126px; }
.hsep.b { margin-top: auto; }
.bt { margin-top: 4px; }
.side .s:last-child { margin-bottom: 4px; }

/* taskbar */
.taskbar { height: 96px; flex: none; border-top: 2px solid #6a4a72; background: linear-gradient(90deg, #57216e, #582075 27%, #6b2a77 40%, #652569 70%, #5e2268); display: flex; position: relative; color: #fff; font-size: 23px; }
.weather { width: 956px; display: flex; padding: 20px 0 0 37px; flex: none; }
.wicon { position: relative; width: 56px; }
.wicon b { position: absolute; left: 23px; top: -10px; width: 32px; height: 32px; border-radius: 50%; background: #ff99a4; color: #111; font-weight: 400; font-size: 21px; line-height: 32px; text-align: center; }
.wtext { margin: -7px 0 0 7px; }
.wtext span, .lang span, .clock span { display: block; line-height: 32px; letter-spacing: -.6px; white-space: nowrap; }
.wtext .soft { color: #d9c8de; letter-spacing: 0; }
.apps { display: flex; height: 94px; align-items: center; flex: none; }
.search { width: 439px; height: 64px; margin: 0 5px 0 27px; border-radius: 32px; background: #774489; border: 2px solid #83559a; display: flex; align-items: center; padding: 0 2px 0 20px; font-size: 26px; color: #ddd0e2; }
.search span { margin-left: 19px; letter-spacing: -.5px; }
.city { margin-left: auto; }
.app { width: 88px; height: 80px; display: flex; align-items: center; justify-content: center; position: relative; flex: none; }
.app.on::before { content: ""; position: absolute; left: 4px; top: 0; width: 80px; height: 79px; border-radius: 9px; background: #71397c; border: 2px solid #794385; }
.app.on svg { position: relative; }
.green { fill: #25d366; }
.badge { position: absolute; left: 44px; top: 5px; width: 37px; height: 32px; border-radius: 16px; background: #dfa0e6; color: #111; font-weight: 400; font-size: 21px; line-height: 32px; text-align: center; letter-spacing: -.5px; }
.dot { position: absolute; left: 38px; bottom: 3px; width: 12px; height: 6px; border-radius: 3px; background: #b58bbd; }
.dot.pillb { left: 28px; width: 32px; background: #e0a0e8; }
.app.on .mini { position: absolute; left: 19px; top: 39px; width: 24px; height: 24px; }
.face { position: absolute; left: 45px; top: 6px; width: 32px; height: 32px; }
.rbadge { position: absolute; left: 46px; top: 6px; width: 31px; height: 31px; border-radius: 50%; background: #33691e; font-size: 17px; font-weight: 600; line-height: 31px; text-align: center; }
.tray { margin-left: auto; display: flex; align-items: center; height: 94px; flex: none; padding-right: 43px; }
.chev { margin-right: 39px; }
.lang { width: 50px; text-align: center; margin-right: 27px; }
.ti { width: 48px; display: flex; justify-content: center; }
.clock { width: 148px; text-align: right; }
.clock span:last-child { letter-spacing: .1px; }
.tbell { margin-left: 18px; }
```
